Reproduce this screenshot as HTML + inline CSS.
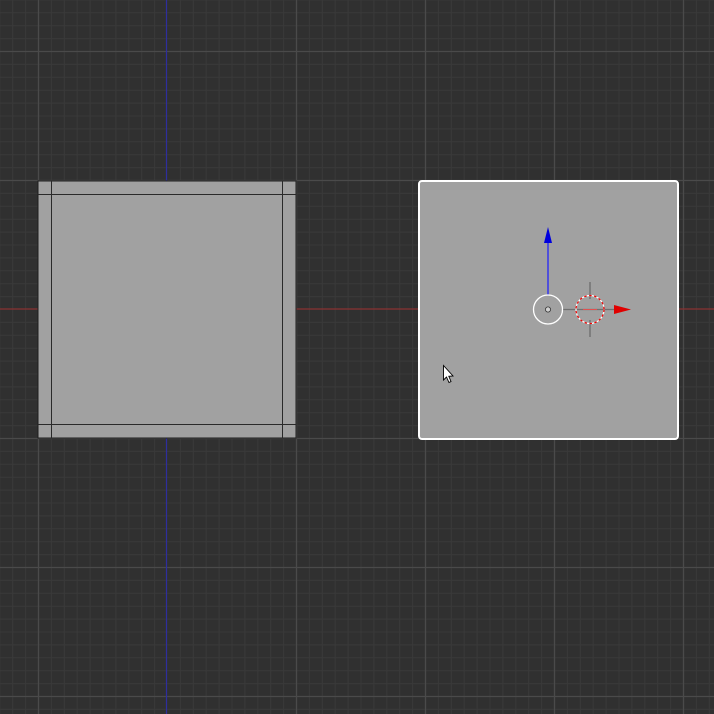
<!DOCTYPE html>
<html><head><style>
html,body{margin:0;padding:0;background:#303030;width:714px;height:714px;overflow:hidden}
svg{display:block}
</style></head><body>
<svg width="714" height="714" viewBox="0 0 714 714" xmlns="http://www.w3.org/2000/svg">
<defs>
<pattern id="g" patternUnits="userSpaceOnUse" x="38.5" y="51.5" width="129" height="129">
<rect width="129" height="129" fill="#303030"/>
<g stroke="#393939" stroke-width="1">
<line x1="12.9" y1="0" x2="12.9" y2="129"/><line x1="25.8" y1="0" x2="25.8" y2="129"/><line x1="38.7" y1="0" x2="38.7" y2="129"/><line x1="51.6" y1="0" x2="51.6" y2="129"/><line x1="64.5" y1="0" x2="64.5" y2="129"/><line x1="77.4" y1="0" x2="77.4" y2="129"/><line x1="90.3" y1="0" x2="90.3" y2="129"/><line x1="103.2" y1="0" x2="103.2" y2="129"/><line x1="116.1" y1="0" x2="116.1" y2="129"/>
<line y1="12.9" x1="0" y2="12.9" x2="129"/><line y1="25.8" x1="0" y2="25.8" x2="129"/><line y1="38.7" x1="0" y2="38.7" x2="129"/><line y1="51.6" x1="0" y2="51.6" x2="129"/><line y1="64.5" x1="0" y2="64.5" x2="129"/><line y1="77.4" x1="0" y2="77.4" x2="129"/><line y1="90.3" x1="0" y2="90.3" x2="129"/><line y1="103.2" x1="0" y2="103.2" x2="129"/><line y1="116.1" x1="0" y2="116.1" x2="129"/>
</g>
</pattern>
</defs>
<rect width="714" height="714" fill="url(#g)"/>
<g stroke="#4a4a4a" stroke-width="1.3">
<line x1="38.5" y1="0" x2="38.5" y2="714"/>
<line x1="296.5" y1="0" x2="296.5" y2="714"/>
<line x1="425.5" y1="0" x2="425.5" y2="714"/>
<line x1="554.5" y1="0" x2="554.5" y2="714"/>
<line x1="683.5" y1="0" x2="683.5" y2="714"/>
<line y1="51.5" x1="0" y2="51.5" x2="714"/>
<line y1="180.5" x1="0" y2="180.5" x2="714"/>
<line y1="438.5" x1="0" y2="438.5" x2="714"/>
<line y1="567.5" x1="0" y2="567.5" x2="714"/>
<line y1="696.5" x1="0" y2="696.5" x2="714"/>
</g>
<line x1="0" y1="309" x2="714" y2="309" stroke="#8a3232" stroke-width="1.2"/>
<line x1="166.5" y1="0" x2="166.5" y2="714" stroke="#2e2e9e" stroke-width="1.2"/>

<!-- left cube -->
<rect x="38" y="181" width="258" height="257" fill="#a1a1a1" stroke="#1e1e1e" stroke-width="1"/>
<g stroke="#2a2a2a" stroke-width="1">
<line x1="51.5" y1="181" x2="51.5" y2="438"/>
<line x1="282.5" y1="181" x2="282.5" y2="438"/>
<line x1="38" y1="194.5" x2="296" y2="194.5"/>
<line x1="38" y1="424.5" x2="296" y2="424.5"/>
</g>

<!-- right plane -->
<rect x="419" y="181" width="259" height="258" rx="3" fill="#a1a1a1" stroke="#ffffff" stroke-width="2"/>

<!-- gizmo -->
<line x1="548" y1="295" x2="548" y2="240" stroke="#1a1aff" stroke-width="1.2"/>
<polygon points="548,227 544,243 552,243" fill="#0000dd"/>
<line x1="563" y1="309.5" x2="614" y2="309.5" stroke="#707070" stroke-width="1.2"/>
<line x1="583" y1="309.5" x2="597" y2="309.5" stroke="#e05050" stroke-width="1"/>
<polygon points="631,309.5 614,305 614,314" fill="#e00000"/>
<line x1="590" y1="282" x2="590" y2="299" stroke="#666" stroke-width="1.2"/>
<line x1="590" y1="320" x2="590" y2="337" stroke="#666" stroke-width="1.2"/>
<circle cx="590" cy="309.5" r="14" fill="none" stroke="#ffffff" stroke-width="1.2"/>
<circle cx="590" cy="309.5" r="14" fill="none" stroke="#ee0000" stroke-width="1.2" stroke-dasharray="2.5 2.5"/>
<circle cx="548" cy="309.5" r="14.5" fill="none" stroke="#ffffff" stroke-width="1.3"/>
<circle cx="548" cy="309.5" r="2.6" fill="#d0d0d0" stroke="#333" stroke-width="0.8"/>

<!-- cursor -->
<path d="M443.5,365.5 L443.5,380 L446.5,377 L449,382.5 L451,381.5 L448.8,376.3 L453,376 Z" fill="#ffffff" stroke="#000" stroke-width="0.9" stroke-linejoin="miter"/>
</svg>
</body></html>
